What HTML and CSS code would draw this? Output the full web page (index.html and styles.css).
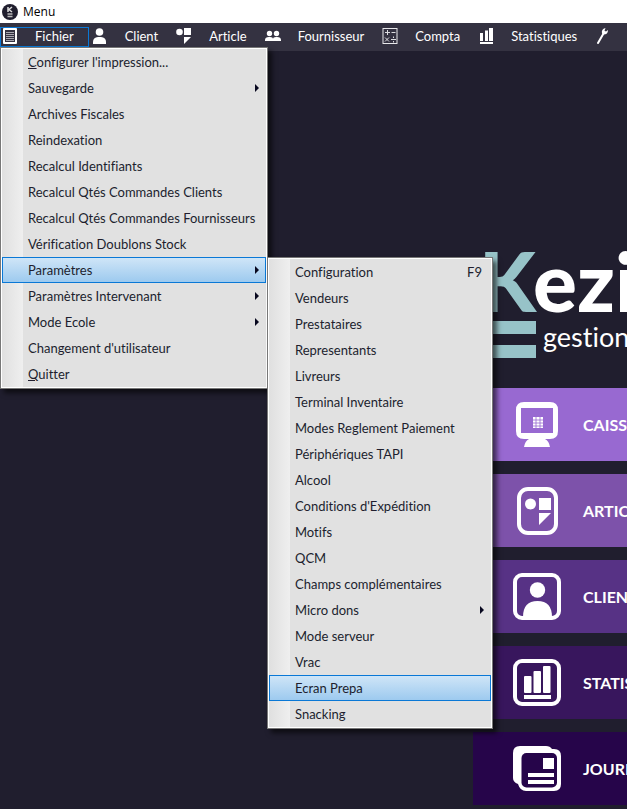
FILE: index.html
```html
<!DOCTYPE html>
<html lang="fr">
<head>
<meta charset="utf-8">
<title>Menu</title>
<link rel="stylesheet" href="styles.css">
</head>
<body>
<header class="titlebar">
  <svg class="app-icon" viewBox="0 0 16 16" aria-hidden="true"><circle cx="8" cy="8" r="8" fill="#201e2e"/><path d="M6 3v5M10 3L7 5.500L10 8" fill="none" stroke="#ddd" stroke-width="1.500"/><path d="M5.500 10h5M5.500 12.500h5" stroke="#bbb" stroke-width="1.300"/></svg>
  <span>Menu</span>
</header>
<nav class="menubar">
  <button class="bar-item open" type="button"><svg viewBox="0 0 16 16"><rect x="1" width="14" height="16" rx="1" fill="#fff"/><rect x="3" y="2" width="10" height="12" fill="#343241"/><path d="M4 4.500h8M4 6.500h8M4 8.500h8M4 10.500h8M4 12.500h8" stroke="#a9a8b0"/></svg>Fichier</button>
  <button class="bar-item" type="button"><svg viewBox="0 0 16 16"><circle cx="7.500" cy="4" r="3.800" fill="#fff"/><path d="M1 16v-2q0-4.500 5-5h3q5 .5 5 5v2z" fill="#fff"/></svg>Client</button>
  <button class="bar-item" type="button"><svg viewBox="0 0 16 16"><circle cx="3.500" cy="4" r="3.300" fill="#fff"/><path d="M8 0h7v7H8zM8 9h7l-7 7z" fill="#fff"/></svg>Article</button>
  <button class="bar-item" type="button"><svg viewBox="0 0 16 16"><circle cx="4.500" cy="5.500" r="2.700" fill="#fff"/><circle cx="11.500" cy="5.500" r="2.700" fill="#fff"/><path d="M0 13v-1q0-3 4-3h1q3 0 3 2q0-2 3-2h1q4 0 4 3v1z" fill="#fff"/></svg>Fournisseur</button>
  <button class="bar-item" type="button"><svg viewBox="0 0 16 16"><rect x="1" y=".5" width="14" height="15" fill="none" stroke="#e8e8eb"/><path d="M3 4.500h5M5.500 2v5M9.500 4.500h4M3 9.500l4 4M7 9.500l-4 4M9 11.500h5M11.500 8.500v1.500M11.500 13v1.500" stroke="#dcdce0" fill="none"/></svg>Compta</button>
  <button class="bar-item" type="button"><svg viewBox="0 0 16 16"><path d="M2 5h3v8H2zM7 2.500h3V13H7zM11 0h4v13h-4zM2 14h13v2H2z" fill="#fff"/></svg>Statistiques</button>
  <button class="bar-item" type="button" aria-label="Outils"><svg viewBox="0 0 16 16"><path d="M3 15L8.500 5.500" stroke="#fff" stroke-width="2" stroke-linecap="round"/><path d="M7 5.500Q6 1 10.500 0L9.500 2.800L11 3.500L13 2Q13 6.500 8.500 6.500z" fill="#fff"/></svg></button>
</nav>
<main class="workspace">
  <div class="brand">
    <div class="mark"><span class="mark-letter">K</span><span class="mark-bar"></span><span class="mark-bar"></span></div>
    <div class="words"><span class="name">ezi</span><span class="tagline">gestion</span></div>
  </div>
  <nav class="tiles">
    <button class="tile caisse" type="button"><svg viewBox="0 0 48 48"><path d="M11 1h26q8 0 8 8v21q0 8-8 8h-5q4 2 5 8H11q1-6 5-8h-5q-8 0-8-8V9q0-8 8-8z" fill="#fff"/><path d="M8 7h32v25H8z" fill="#9869d1"/><path d="M20 16h10v11H20z" fill="#fff"/><path d="M23 16v11M27 16v11M20 19h10M20 22h10M20 25h10" stroke="#9869d1" stroke-width=".8"/></svg>CAISSE</button>
    <button class="tile article" type="button"><svg viewBox="0 0 48 48"><rect x="6" y="2" width="37" height="44" rx="9" fill="none" stroke="#fff" stroke-width="4"/><circle cx="17.500" cy="17" r="5.500" fill="#fff"/><path d="M26 11h12v12H26zM26 26h12L26 38z" fill="#fff"/></svg>ARTICLES</button>
    <button class="tile client" type="button"><svg viewBox="0 0 48 48"><rect x="2" y="2" width="44" height="43" rx="7" fill="none" stroke="#fff" stroke-width="4"/><circle cx="24.500" cy="17" r="7.700" fill="#fff"/><path d="M10 44q0-16 14.500-16T39 44z" fill="#fff"/></svg>CLIENTS</button>
    <button class="tile stats" type="button"><svg viewBox="0 0 48 48"><rect x="2" y="2" width="44" height="43" rx="7" fill="none" stroke="#fff" stroke-width="4"/><rect x="11" y="17" width="7.500" height="17" rx="1" fill="#fff"/><rect x="20.500" y="12" width="7.500" height="22" rx="1" fill="#fff"/><rect x="30" y="7" width="7.500" height="27" rx="1" fill="#fff"/><path d="M11 36h27v4H11z" fill="#fff"/></svg>STATISTIQUES</button>
    <button class="tile journal" type="button"><svg viewBox="0 0 48 48"><path d="M7 1h26q4 0 6 3h2q7 0 7 7v28q0 7-7 7H13q-6 0-8-7q-5-2-5-6V8q0-7 7-7z" fill="#fff"/><rect x="8.500" y="8" width="35.500" height="34.500" rx="5" fill="#26054a"/><path d="M30 13h11v11H30zM15 28h26v4H15zM15 35h26v4H15z" fill="#fff"/></svg>JOURNAL</button>
  </nav>
</main>
<div class="popup file-menu" role="menu">
  <button type="button"><span><u>C</u>onfigurer l'impression...</span></button>
  <button type="button" class="sub">Sauvegarde</button>
  <button type="button">Archives Fiscales</button>
  <button type="button">Reindexation</button>
  <button type="button">Recalcul Identifiants</button>
  <button type="button">Recalcul Qtés Commandes Clients</button>
  <button type="button">Recalcul Qtés Commandes Fournisseurs</button>
  <button type="button">Vérification Doublons Stock</button>
  <button type="button" class="sub active">Paramètres</button>
  <button type="button" class="sub">Paramètres Intervenant</button>
  <button type="button" class="sub">Mode Ecole</button>
  <button type="button">Changement d'utilisateur</button>
  <button type="button"><span><u>Q</u>uitter</span></button>
</div>
<div class="popup settings-menu" role="menu">
  <button type="button">Configuration<span class="key">F9</span></button>
  <button type="button">Vendeurs</button>
  <button type="button">Prestataires</button>
  <button type="button">Representants</button>
  <button type="button">Livreurs</button>
  <button type="button">Terminal Inventaire</button>
  <button type="button">Modes Reglement Paiement</button>
  <button type="button">Périphériques TAPI</button>
  <button type="button">Alcool</button>
  <button type="button">Conditions d'Expédition</button>
  <button type="button">Motifs</button>
  <button type="button">QCM</button>
  <button type="button">Champs complémentaires</button>
  <button type="button" class="sub">Micro dons</button>
  <button type="button">Mode serveur</button>
  <button type="button">Vrac</button>
  <button type="button" class="active">Ecran Prepa</button>
  <button type="button">Snacking</button>
</div>
</body>
</html>
```
FILE: styles.css
```css
* { box-sizing: border-box; }
body {
  margin: 0;
  min-height: 100vh;
  position: relative;
  overflow: hidden;
  display: flex;
  flex-direction: column;
  background: #201e2e;
  font-family: Lato, "Liberation Sans", sans-serif;
  font-size: 13px;
  font-variant-ligatures: none;
}
button { font: inherit; font-variant-ligatures: none; margin: 0; border: 0; text-align: left; white-space: nowrap; }

.titlebar {
  display: flex;
  align-items: center;
  gap: 5px;
  height: 23px;
  padding-left: 2px;
  background: #fff;
  color: #000;
  font: 12px "Open Sans", "Noto Sans", sans-serif;
}
.app-icon { width: 16px; height: 16px; }

.menubar { display: flex; height: 28px; padding-top: 4px; background: #343241; overflow: hidden; }
.bar-item {
  display: flex;
  flex: none;
  align-items: center;
  gap: 17px;
  height: 20px;
  padding: 0 14px 2px 2px;
  border: 1px solid transparent;
  background: none;
  color: #fff;
}
.bar-item.open { border-color: #0a78d6; padding-left: 1px; }
.bar-item svg { width: 16px; height: 16px; }

.workspace {
  flex: 1;
  display: flex;
  flex-direction: column;
  padding: 191px 0 4px 473px;
}
.brand { display: flex; height: 146px; padding-left: 9px; }
.mark { width: 54px; flex: none; display: flex; flex-direction: column; align-items: flex-end; color: #97c3c8; }
.mark-letter { font-size: 82px; line-height: 76px; font-weight: 900; margin-bottom: 3px; }
.mark-bar { width: 50px; height: 13px; margin-bottom: 11px; background: #97c3c8; }
.words { display: flex; flex-direction: column; margin-left: -3px; color: #fff; white-space: nowrap; }
.name { font-size: 82px; line-height: 76px; font-weight: 900; }
.tagline { font-size: 27px; line-height: 38px; padding-left: 10px; }

.tiles { display: flex; flex-direction: column; gap: 13px; }
.tile {
  display: flex;
  align-items: center;
  gap: 22px;
  height: 73px;
  padding-left: 40px;
  overflow: hidden;
  color: #fff;
  font-size: 16px;
  font-weight: 700;
}
.tile svg { width: 48px; height: 48px; flex: none; }
.caisse { background: #9869d1; }
.article { background: #7d52aa; }
.client { background: #573285; }
.stats { background: #38165d; }
.journal { background: #26054a; }

.popup {
  position: absolute;
  display: flex;
  flex-direction: column;
  padding: 1px;
  border: 1px solid #777;
  background: linear-gradient(90deg, #dfdfdf, #efefef 22px, #e1e1e1 22px);
  box-shadow: inset 0 0 0 1px #fff, 4px 4px 5px rgba(0, 0, 0, .6);
}
.file-menu { left: 0; top: 47px; width: 268px; }
.settings-menu { left: 267px; top: 257px; width: 226px; }
.popup button {
  display: flex;
  align-items: center;
  height: 26px;
  padding: 0 8px 1px 25px;
  border: 1px solid transparent;
  background: none;
  color: #201e2e;
}
.popup .active { border-color: #0a78d6; background: linear-gradient(#cfe5f7, #9dcaef); }
.popup .sub::after {
  content: "";
  margin-left: auto;
  margin-right: -2px;
  border: 4px solid transparent;
  border-left-color: #08081f;
  border-right: 0;
}
.key { margin-left: auto; }
```
